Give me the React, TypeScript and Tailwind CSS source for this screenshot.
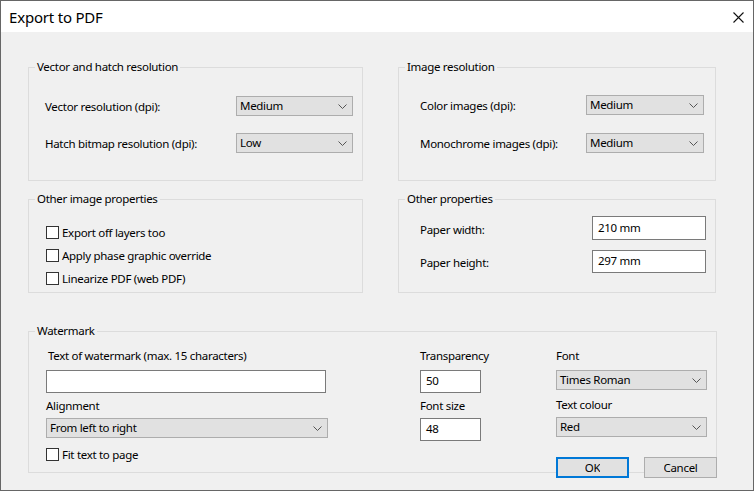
import React from "react";

const font = { fontFamily: '"Noto Sans", "Segoe UI", sans-serif' };
const T = "text-[11.5px] leading-[16px] tracking-[-0.3px]";

function Chevron() {
  return (
    <svg width="9" height="5" viewBox="0 0 9 5" className="shrink-0">
      <polyline points="0.5,0.5 4.5,4.5 8.5,0.5" fill="none" stroke="#555" strokeWidth="1" />
    </svg>
  );
}

function Select({ value, w }: { value: string; w: string }) {
  return (
    <div
      className={`${w} h-[20px] bg-[#e1e1e1] border border-[#adadad] flex items-center justify-between pl-[3px] pr-[5px] text-black`}
    >
      <span className={T}>{value}</span>
      <Chevron />
    </div>
  );
}

function Input({ value, w, h }: { value: string; w: string; h: string }) {
  return (
    <div className={`${w} ${h} bg-white border border-[#7a7a7a] flex items-center pl-[5px] text-black`}>
      <span className={`-mt-[1px] ${T}`}>{value}</span>
    </div>
  );
}

function Checkbox({ label }: { label: string }) {
  return (
    <div className="flex items-center h-[13px]">
      <div className="w-[13px] h-[13px] border border-[#333] bg-white shrink-0" />
      <span className={`ml-[3px] text-black ${T}`}>{label}</span>
    </div>
  );
}

function Group({ title, className, children }: { title: string; className: string; children?: React.ReactNode }) {
  return (
    <div className={`relative border border-[#dcdcdc] ${className}`}>
      <div className={`absolute -top-[9px] left-[6px] px-[2px] bg-[#f0f0f0] text-black whitespace-nowrap ${T}`}>
        {title}
      </div>
      {children}
    </div>
  );
}

export default function App() {
  return (
    <div
      className="w-[754px] h-[491px] bg-[#f0f0f0] border border-[#666] flex flex-col overflow-hidden text-black"
      style={font}
    >
      {/* Title bar */}
      <div className="h-[31px] bg-white flex items-center justify-between shrink-0">
        <span className="ml-[8px] text-[15px] leading-[20px] tracking-[-0.2px] mt-[1px]">Export to PDF</span>
        <svg width="11" height="11" viewBox="0 0 11 11" className="mr-[9px] mt-[1px]">
          <path d="M0.5 0.5 L10.5 10.5 M10.5 0.5 L0.5 10.5" stroke="#111" strokeWidth="1.1" fill="none" />
        </svg>
      </div>

      <div className="flex flex-col pl-[27px] pt-[35px]">
        {/* Row 1 */}
        <div className="flex">
          <Group title="Vector and hatch resolution" className="w-[335px] h-[114px]">
            <div className="flex flex-col pt-[28px] pl-[16px] gap-[17px]">
              <div className="flex items-center">
                <span className={`w-[191px] mt-[2px] ${T}`}>Vector resolution (dpi):</span>
                <Select value="Medium" w="w-[117px]" />
              </div>
              <div className="flex items-center">
                <span className={`w-[191px] mt-[2px] ${T}`}>Hatch bitmap resolution (dpi):</span>
                <Select value="Low" w="w-[117px]" />
              </div>
            </div>
          </Group>
          <Group title="Image resolution" className="ml-[35px] w-[318px] h-[114px]">
            <div className="flex flex-col pt-[27px] pl-[21px] gap-[18px]">
              <div className="flex items-center">
                <span className={`w-[166px] mt-[2px] ${T}`}>Color images (dpi):</span>
                <Select value="Medium" w="w-[118px]" />
              </div>
              <div className="flex items-center">
                <span className={`w-[166px] mt-[2px] ${T}`}>Monochrome images (dpi):</span>
                <Select value="Medium" w="w-[118px]" />
              </div>
            </div>
          </Group>
        </div>

        {/* Row 2 */}
        <div className="flex mt-[18px]">
          <Group title="Other image properties" className="w-[335px] h-[94px]">
            <div className="flex flex-col pt-[26px] pl-[17px] gap-[10px]">
              <Checkbox label="Export off layers too" />
              <Checkbox label="Apply phase graphic override" />
              <Checkbox label="Linearize PDF (web PDF)" />
            </div>
          </Group>
          <Group title="Other properties" className="ml-[35px] w-[318px] h-[94px]">
            <div className="flex flex-col pt-[16px] pl-[21px] gap-[10px]">
              <div className="flex items-center">
                <span className={`w-[172px] mt-[4px] ${T}`}>Paper width:</span>
                <Input value="210 mm" w="w-[114px]" h="h-[24px]" />
              </div>
              <div className="flex items-center">
                <span className={`w-[172px] mt-[2px] ${T}`}>Paper height:</span>
                <Input value="297 mm" w="w-[114px]" h="h-[23px]" />
              </div>
            </div>
          </Group>
        </div>

        {/* Row 3 */}
        <Group title="Watermark" className="mt-[38px] w-[689px] h-[142px]">
          <div className="flex pl-[17px] pt-[16px]">
            <div className="w-[374px] flex flex-col">
              <span className={`ml-[2px] ${T}`}>Text of watermark (max. 15 characters)</span>
              <div className="mt-[6px] w-[280px] h-[23px] bg-white border border-[#7a7a7a]" />
              <span className={`mt-[5px] ${T}`}>Alignment</span>
              <div className="mt-[4px]">
                <Select value="From left to right" w="w-[282px]" />
              </div>
              <div className="mt-[10px]">
                <Checkbox label="Fit text to page" />
              </div>
            </div>
            <div className="w-[136px] flex flex-col">
              <span className={T}>Transparency</span>
              <div className="mt-[6px]">
                <Input value="50" w="w-[61px]" h="h-[23px]" />
              </div>
              <span className={`mt-[5px] ${T}`}>Font size</span>
              <div className="mt-[4px]">
                <Input value="48" w="w-[61px]" h="h-[23px]" />
              </div>
            </div>
            <div className="w-[151px] flex flex-col">
              <span className={T}>Font</span>
              <div className="mt-[6px]">
                <Select value="Times Roman" w="w-[151px]" />
              </div>
              <span className={`mt-[7px] ${T}`}>Text colour</span>
              <div className="mt-[4px]">
                <Select value="Red" w="w-[151px]" />
              </div>
            </div>
          </div>
        </Group>

        {/* Buttons */}
        <div className="relative -mt-[16px] flex justify-end pr-[36px] gap-[15px]">
          <div className="w-[73px] h-[21px] bg-[#e1e1e1] border-2 border-[#0078d7] flex justify-center">
            <span className={`block h-[12px] overflow-hidden mt-[1px] ${T}`}>OK</span>
          </div>
          <div className="w-[73px] h-[21px] bg-[#e1e1e1] border border-[#adadad] flex justify-center">
            <span className={`block h-[13px] overflow-hidden mt-[2px] ${T}`}>Cancel</span>
          </div>
        </div>
      </div>
    </div>
  );
}
